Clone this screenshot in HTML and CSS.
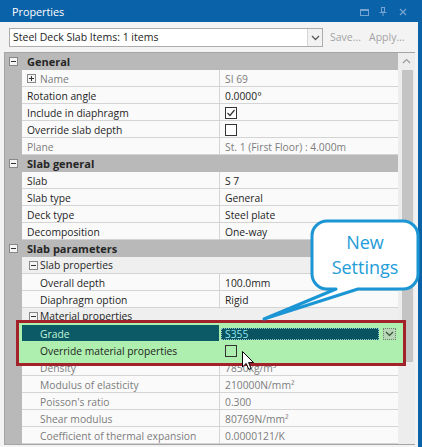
FILE: index.html
```html
<!DOCTYPE html>
<html>
<head>
<meta charset="utf-8">
<link rel="stylesheet" href="styles.css">
</head>
<body>
<div class="win">
  <div class="titlebar">
    <span class="title">Properties</span>
    <svg class="ticons" width="50" height="22" viewBox="0 0 50 22">
      <rect x="2.5" y="9.5" width="8" height="6" fill="none" stroke="#76a3d0" stroke-width="1"/>
      <line x1="2" y1="10" x2="11" y2="10" stroke="#76a3d0" stroke-width="2"/>
      <rect x="23.5" y="7.5" width="3" height="4.5" fill="none" stroke="#76a3d0" stroke-width="1"/>
      <line x1="21.5" y1="12.5" x2="28.5" y2="12.5" stroke="#76a3d0" stroke-width="1"/>
      <line x1="25" y1="13" x2="25" y2="16" stroke="#76a3d0" stroke-width="1"/>
      <line x1="42" y1="9" x2="48" y2="15" stroke="#76a3d0" stroke-width="1.3"/>
      <line x1="48" y1="9" x2="42" y2="15" stroke="#76a3d0" stroke-width="1.3"/>
    </svg>
  </div>
  <div class="toolbar">
    <div class="combo">
      <span class="ctext">Steel Deck Slab Items: 1 items</span>
      <span class="drop"><svg width="15" height="17" viewBox="0 0 15 17"><polyline points="4,7 7.5,10.5 11,7" fill="none" stroke="#5a5a5a" stroke-width="1.3"/></svg></span>
    </div>
    <span class="tbtn save">Save...</span>
    <span class="tbtn apply">Apply...</span>
  </div>
  <div class="grid">
    <div class="rows">
      <div class="row cat"><div class="g"><svg class="bx" width="9" height="9" viewBox="0 0 9 9"><rect x="0.5" y="0.5" width="8" height="8" fill="#f4f4f4" stroke="#888"/><line x1="2" y1="4.5" x2="7" y2="4.5" stroke="#333"/></svg></div><div class="c">General</div></div>
      <div class="row ro"><div class="g"></div><div class="l"><svg class="bx pl" width="9" height="9" viewBox="0 0 9 9"><rect x="0.5" y="0.5" width="8" height="8" fill="#f4f4f4" stroke="#888"/><line x1="2" y1="4.5" x2="7" y2="4.5" stroke="#333"/><line x1="4.5" y1="2" x2="4.5" y2="7" stroke="#333"/></svg>Name</div><div class="v">SI 69</div></div>
      <div class="row"><div class="g"></div><div class="l">Rotation angle</div><div class="v">0.0000°</div></div>
      <div class="row"><div class="g"></div><div class="l">Include in diaphragm</div><div class="v"><svg class="cb" width="12" height="12" viewBox="0 0 12 12"><rect x="0.5" y="0.5" width="11" height="11" fill="#fff" stroke="#333"/><polyline points="2.5,6 5,8.5 9.5,3" fill="none" stroke="#333" stroke-width="1.2"/></svg></div></div>
      <div class="row"><div class="g"></div><div class="l">Override slab depth</div><div class="v"><svg class="cb" width="12" height="12" viewBox="0 0 12 12"><rect x="0.5" y="0.5" width="11" height="11" fill="#fff" stroke="#333"/></svg></div></div>
      <div class="row ro"><div class="g"></div><div class="l">Plane</div><div class="v">St. 1 (First Floor) : 4.000m</div></div>
      <div class="row cat"><div class="g"><svg class="bx" width="9" height="9" viewBox="0 0 9 9"><rect x="0.5" y="0.5" width="8" height="8" fill="#f4f4f4" stroke="#888"/><line x1="2" y1="4.5" x2="7" y2="4.5" stroke="#333"/></svg></div><div class="c">Slab general</div></div>
      <div class="row"><div class="g"></div><div class="l">Slab</div><div class="v">S 7</div></div>
      <div class="row"><div class="g"></div><div class="l">Slab type</div><div class="v">General</div></div>
      <div class="row"><div class="g"></div><div class="l">Deck type</div><div class="v">Steel plate</div></div>
      <div class="row"><div class="g"></div><div class="l">Decomposition</div><div class="v">One-way</div></div>
      <div class="row cat"><div class="g"><svg class="bx" width="9" height="9" viewBox="0 0 9 9"><rect x="0.5" y="0.5" width="8" height="8" fill="#f4f4f4" stroke="#888"/><line x1="2" y1="4.5" x2="7" y2="4.5" stroke="#333"/></svg></div><div class="c">Slab parameters</div></div>
      <div class="row sub"><div class="g"></div><div class="s"><svg class="bx" width="9" height="9" viewBox="0 0 9 9"><rect x="0.5" y="0.5" width="8" height="8" fill="#f4f4f4" stroke="#888"/><line x1="2" y1="4.5" x2="7" y2="4.5" stroke="#333"/></svg>Slab properties</div></div>
      <div class="row lv2"><div class="g"></div><div class="l">Overall depth</div><div class="v">100.0mm</div></div>
      <div class="row lv2"><div class="g"></div><div class="l">Diaphragm option</div><div class="v">Rigid</div></div>
      <div class="row sub"><div class="g"></div><div class="s"><svg class="bx" width="9" height="9" viewBox="0 0 9 9"><rect x="0.5" y="0.5" width="8" height="8" fill="#f4f4f4" stroke="#888"/><line x1="2" y1="4.5" x2="7" y2="4.5" stroke="#333"/></svg>Material properties</div></div>
      <div class="row lv2 hl sel"><div class="g"></div><div class="l">Grade</div><div class="v"><div class="inp">S355</div><div class="ibtn"><svg width="11" height="10" viewBox="0 0 11 10"><polyline points="2,3 5.5,6.5 9,3" fill="none" stroke="#3a4a3a" stroke-width="1.2"/></svg></div></div></div>
      <div class="row lv2 hl"><div class="g"></div><div class="l">Override material properties</div><div class="v"><svg class="cb" width="12" height="12" viewBox="0 0 12 12"><rect x="0.5" y="0.5" width="11" height="11" fill="#aeeeae" stroke="#333"/></svg></div></div>
      <div class="row lv2 ro"><div class="g"></div><div class="l">Density</div><div class="v">7850kg/m³</div></div>
      <div class="row lv2 ro"><div class="g"></div><div class="l">Modulus of elasticity</div><div class="v">210000N/mm²</div></div>
      <div class="row lv2 ro"><div class="g"></div><div class="l">Poisson's ratio</div><div class="v">0.300</div></div>
      <div class="row lv2 ro"><div class="g"></div><div class="l">Shear modulus</div><div class="v">80769N/mm²</div></div>
      <div class="row lv2 ro"><div class="g"></div><div class="l">Coefficient of thermal expansion</div><div class="v">0.0000121/K</div></div>
    </div>
    <div class="scroll">
      <div class="up"><svg width="17" height="17" viewBox="0 0 17 17"><polyline points="5,10 8.5,6.5 12,10" fill="none" stroke="#9a9a9a" stroke-width="1.2"/></svg></div>
      <div class="thumb"></div>
    </div>
  </div>

  <div class="highlight"><div class="hlin"></div></div>

  <div class="callout">
    <svg class="bubble" width="162" height="106" viewBox="0 0 162 106">
      <path d="M67,5 H143 A15,15 0 0 1 158,20 V58 A15,15 0 0 1 143,73 H98 L4,103 L76,73 H67 A15,15 0 0 1 52,58 V20 A15,15 0 0 1 67,5 Z" fill="#fff" stroke="#1b95d3" stroke-width="3" stroke-linejoin="round"/>
    </svg>
    <div class="ctxt"><span>New</span><span>Settings</span></div>
  </div>

  <svg class="cursor" width="13" height="20" viewBox="0 0 13 20">
    <path d="M0.5,0.5 L0.5,16 L4.2,12.4 L6.8,18.4 L9.1,17.4 L6.6,11.6 L11.6,11.6 Z" fill="#fff" stroke="#000" stroke-width="1"/>
  </svg>
</div>
</body>
</html>
```

FILE: styles.css
```css
* { box-sizing: border-box; }
html, body { margin: 0; padding: 0; }
body {
  width: 422px;
  height: 447px;
  overflow: hidden;
  background: #f3f3f3;
  font-family: "Open Sans", "Segoe UI", sans-serif;
  font-size: 10.3px;
  color: #1e1e1e;
}
.win {
  position: relative;
  width: 422px;
  height: 447px;
  background: #f3f3f3;
  border-right: 4px solid #0a62a8;
}
.titlebar {
  height: 22px;
  background: #0a62a8;
  display: flex;
  align-items: center;
  justify-content: space-between;
  padding: 0 10px 0 12px;
  color: #fff;
  font-size: 10.8px;
}
.ticons { display: block; }
.toolbar {
  height: 30px;
  display: flex;
  align-items: flex-start;
  padding: 6px 0 0 9px;
  font-size: 10.5px;
}
.combo {
  width: 314px;
  height: 19px;
  border: 1px solid #acacac;
  background: #fff;
  display: flex;
}
.ctext {
  flex: 1;
  padding-left: 3px;
  line-height: 17px;
  color: #1e1e1e;
}
.drop {
  width: 15px;
  border-left: 1px solid #d6d6d6;
  background: #f2f2f2;
}
.drop svg { display: block; }
.tbtn { line-height: 19px; color: #a3a3a3; }
.save { margin-left: 7px; }
.apply { margin-left: 8px; }

.grid {
  margin-left: 4px;
  width: 411px;
  display: flex;
  border-left: 1px solid #a4a4a4;
  border-top: 1px solid #a4a4a4;
  border-bottom: 1px solid #a4a4a4;
}
.rows { width: 393px; display: flex; flex-direction: column; }
.row {
  display: grid;
  grid-template-columns: 17px 197px 179px;
  height: 17px;
}
.g {
  background: #b9b9b9;
  display: flex;
  align-items: center;
  justify-content: center;
}
.bx { display: block; flex: none; }
.l, .v {
  background: #fafafa;
  border-bottom: 1px solid #d4d4d4;
  padding: 2px 0 0 5px;
  line-height: 14px;
  white-space: nowrap;
  overflow: hidden;
}
.v { border-left: 1px solid #d4d4d4; }
.l { display: flex; align-items: flex-start; }
.pl { margin: 2px 4px 0 0; }
.cb { display: block; margin-top: 1px; }
.lv2 .l { padding-left: 18px; }
.ro .l, .ro .v { color: #7c7c7c; }
.cat .c {
  grid-column: 2 / 4;
  background: #b9b9b9;
  font-weight: bold;
  font-size: 11px;
  color: #262626;
  padding: 2px 0 0 5px;
  line-height: 14px;
}
.sub .s {
  grid-column: 2 / 4;
  background: #efefef;
  border-bottom: 1px solid #d4d4d4;
  display: flex;
  align-items: center;
  gap: 2px;
  padding-left: 7px;
  line-height: 14px;
  color: #262626;
}
.hl .g { background: linear-gradient(to right, #b9b9b9 14px, #aeeeae 14px); }
.hl .l, .hl .v { background: #aeeeae; border-color: #aeeeae; }
.sel .l { background: #0b5a66; color: #c4f4d6; border-color: #aeeeae; }
.sel .v { display: flex; align-items: flex-start; padding: 3px 0 0 1px; gap: 4px; }
.inp {
  width: 158px;
  height: 12px;
  background: #0a5360;
  border: 1px dotted #8fc6c8;
  color: #8ce8f0;
  padding-left: 3px;
  line-height: 10px;
}
.ibtn {
  width: 13px;
  height: 12px;
  background: #b6d8b6;
  border: 1px dotted #6e7f6e;
}
.ibtn svg { display: block; }

.scroll { width: 17px; background: #ededed; display: flex; flex-direction: column; }
.up svg { display: block; }
.thumb { height: 292px; margin: 0 2px 0 4px; background: #c4c4c4; }

.highlight {
  position: absolute;
  left: 16px;
  top: 320px;
  width: 390px;
  height: 46px;
  border: 3px solid #a3212b;
}
.hlin {
  width: 100%;
  height: 100%;
  border-style: solid;
  border-color: #aeeeae;
  border-width: 2px 5px 4px 0;
}
.callout {
  position: absolute;
  left: 260px;
  top: 216px;
  width: 162px;
  height: 106px;
}
.bubble { display: block; }
.ctxt {
  position: absolute;
  left: 52px;
  top: 5px;
  width: 106px;
  padding-top: 9px;
  display: flex;
  flex-direction: column;
  align-items: center;
  font-size: 18px;
  line-height: 25px;
  color: #239cd8;
}
.cursor {
  position: absolute;
  left: 242px;
  top: 351px;
}
```
